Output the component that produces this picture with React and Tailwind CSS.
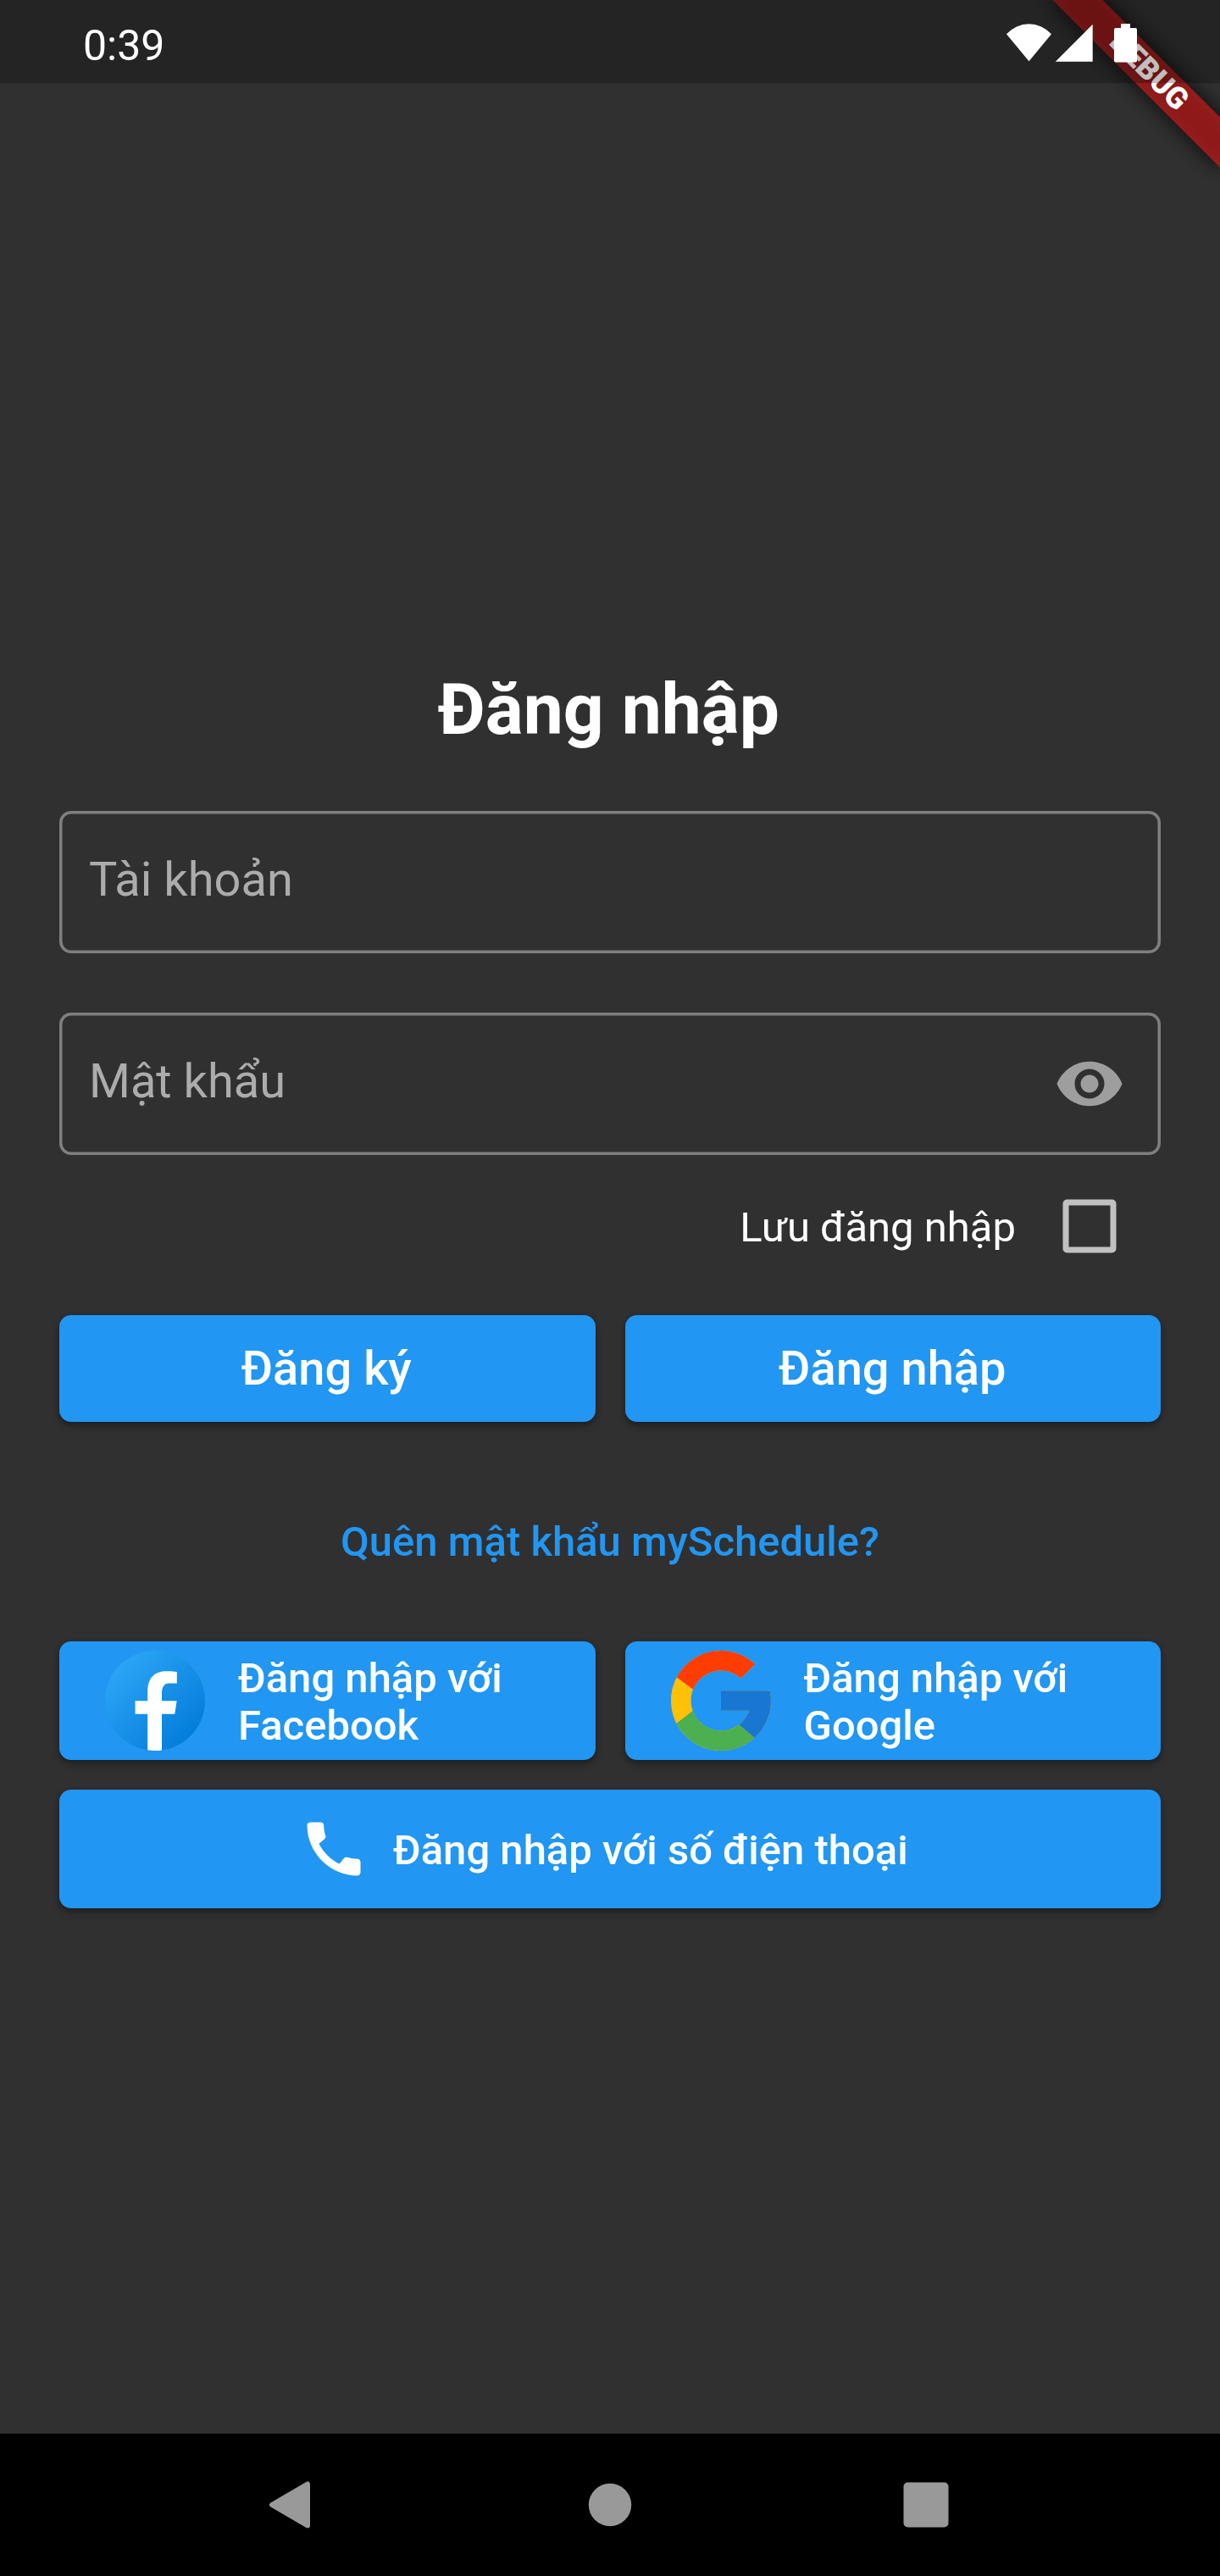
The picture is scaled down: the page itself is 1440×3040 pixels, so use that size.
import { useState } from "react";
import { MdCall, MdVisibility } from "react-icons/md";

const button =
  "rounded-[14px] bg-[#2196f3] font-medium text-white shadow-[0_5px_8px_rgba(0,0,0,0.3),0_1px_5px_rgba(0,0,0,0.15)]";

function StatusBar() {
  return (
    <div className="absolute inset-x-0 top-0 flex h-[98px] items-start justify-between bg-black/25 pl-[98px] pr-[98px] text-white">
      <span className="pt-[24px] text-[50px] leading-[60px]">0:39</span>
      <div className="flex items-start pt-7">
        <svg className="h-[46px] w-[53px]" viewBox="0 0 53 46" fill="currentColor">
          <path d="M26.5 44.3 0 12.3A35.3 35.3 0 0 1 53 12.3Z" />
        </svg>
        <svg className="ml-[5px] h-[46px] w-11" viewBox="0 0 44 46" fill="currentColor">
          <path d="M43.7 .8V44.7H-.2Z" />
        </svg>
        <svg className="ml-[25px] h-[46px] w-[27px]" viewBox="0 0 27 46" fill="currentColor">
          <path d="M8 0H19V5H25a2 2 0 0 1 2 2V43.4a2 2 0 0 1-2 2H2a2 2 0 0 1-2-2V7a2 2 0 0 1 2-2H8Z" />
        </svg>
      </div>
    </div>
  );
}

function DebugBanner() {
  return (
    <div className="pointer-events-none absolute right-0 top-0 h-[280px] w-[280px] overflow-hidden">
      <div className="absolute left-[56px] top-[63px] h-[42px] w-[280px] rotate-45">
        <div className="absolute inset-0 bg-black/85 blur-[12.5px]" />
        <div className="relative flex h-full items-center justify-center bg-[#b71c1c]/77 text-[35.7px] font-black leading-none text-white">
          DEBUG
        </div>
      </div>
    </div>
  );
}

function Field({ label, children }) {
  return (
    <label className="flex h-[168px] items-center justify-between rounded-[14px] pl-[35px] pr-[42px] shadow-[inset_0_0_0_3.5px_#7f7f7f]">
      <span className="pb-[6px] text-[56px] leading-[66px] text-[#acacac]">{label}</span>
      {children}
    </label>
  );
}

function FacebookLogo() {
  return (
    <svg className="h-[118px] w-[118px] shrink-0" viewBox="4 4 40 40">
      <defs>
        <linearGradient id="fb" x1="9.993" y1="9.993" x2="40.615" y2="40.615" gradientUnits="userSpaceOnUse">
          <stop offset="0" stopColor="#2aa4f4" />
          <stop offset="1" stopColor="#007ad9" />
        </linearGradient>
      </defs>
      <circle cx="24" cy="24" r="20" fill="url(#fb)" />
      <path
        fill="#fff"
        d="M26.707,29.301h5.176l0.813-5.258h-5.989v-2.874c0-2.184,0.714-4.121,2.757-4.121h3.283V12.46c-0.577-0.078-1.797-0.248-4.102-0.248c-4.814,0-7.636,2.542-7.636,8.334v3.498H16.06v5.258h4.948v14.452C21.988,43.9,22.981,44,24,44c0.921,0,1.82-0.084,2.707-0.204V29.301z"
      />
    </svg>
  );
}

function GoogleLogo() {
  return (
    <svg className="h-[118px] w-[118px] shrink-0" viewBox="4 4 40 40">
      <path
        fill="#FFC107"
        d="M43.611,20.083H42V20H24v8h11.303c-1.649,4.657-6.08,8-11.303,8c-6.627,0-12-5.373-12-12c0-6.627,5.373-12,12-12c3.059,0,5.842,1.154,7.961,3.039l5.657-5.657C34.046,6.053,29.268,4,24,4C12.955,4,4,12.955,4,24c0,11.045,8.955,20,20,20c11.045,0,20-8.955,20-20C44,22.659,43.862,21.35,43.611,20.083z"
      />
      <path
        fill="#FF3D00"
        d="M6.306,14.691l6.571,4.819C14.655,15.108,18.961,12,24,12c3.059,0,5.842,1.154,7.961,3.039l5.657-5.657C34.046,6.053,29.268,4,24,4C16.318,4,9.656,8.337,6.306,14.691z"
      />
      <path
        fill="#4CAF50"
        d="M24,44c5.166,0,9.86-1.977,13.409-5.192l-6.19-5.238C29.211,35.091,26.715,36,24,36c-5.202,0-9.619-3.317-11.283-7.946l-6.522,5.025C9.505,39.556,16.227,44,24,44z"
      />
      <path
        fill="#1976D2"
        d="M43.611,20.083H42V20H24v8h11.303c-0.792,2.237-2.231,4.166-4.087,5.571c0.001-0.001,0.002-0.001,0.003-0.002l6.19,5.238C36.971,39.205,44,34,44,24C44,22.659,43.862,21.35,43.611,20.083z"
      />
    </svg>
  );
}

function SocialButton({ logo, name }) {
  return (
    <button className={`${button} flex h-[140px] items-center gap-[39px] pl-[54px] text-left text-[49px] leading-[56px]`}>
      {logo}
      <span className="pt-[3px]">
        Đăng nhập với
        <br />
        {name}
      </span>
    </button>
  );
}

function NavBar() {
  return (
    <nav className="flex h-[168px] items-center bg-black pl-[317px] text-[#999999]">
      <svg className="h-[56px] w-[50px]" viewBox="0 0 50 56" fill="currentColor">
        <path d="M4 28 46 3.5V52.5Z" stroke="currentColor" strokeWidth="6" strokeLinejoin="round" />
      </svg>
      <svg className="ml-[327px] h-[52px] w-[52px]" viewBox="0 0 52 52" fill="currentColor">
        <circle cx="26" cy="26" r="25.2" />
      </svg>
      <svg className="ml-[320px] h-[54px] w-[54px]" viewBox="0 0 54 54" fill="currentColor">
        <rect x=".5" y=".5" width="53" height="53" rx="5" />
      </svg>
    </nav>
  );
}

export default function App() {
  const [saved, setSaved] = useState(false);
  return (
    <div className="relative flex h-[3040px] w-[1440px] flex-col overflow-hidden bg-[#303030] font-['Roboto',sans-serif]">
      <main className="flex grow flex-col px-[70px] pt-[789px]">
        <h1 className="pr-[3px] text-center text-[84px] font-bold leading-[98px] text-white">Đăng nhập</h1>
        <div className="mt-[70px] flex flex-col gap-[70px]">
          <Field label="Tài khoản" />
          <Field label="Mật khẩu">
            <MdVisibility className="size-[84px] text-[#9e9e9e]" />
          </Field>
        </div>

        <div className="flex h-[168px] items-center justify-end">
          <span className="pr-[3px] pt-[3px] text-[49px] leading-[58px] text-white">Lưu đăng nhập</span>
          <button
            role="checkbox"
            aria-checked={saved}
            onClick={() => setSaved(!saved)}
            className="flex size-[168px] items-center justify-center"
          >
            <svg className="size-16" viewBox="0 0 64 64" fill="none">
              <rect x="4" y="4" width="56" height="56" rx="1.5" stroke="#c1c1c1" strokeWidth="7" />
              {saved && <path d="M16 33 28 45 50 21" stroke="#c1c1c1" strokeWidth="7" />}
            </svg>
          </button>
        </div>

        <div className="mt-[21px] grid grid-cols-2 gap-[35px]">
          <button className={`${button} h-[126px] pr-[2px] text-[56px] leading-[66px]`}>Đăng ký</button>
          <button className={`${button} h-[126px] pr-px text-[56px] leading-[66px]`}>Đăng nhập</button>
        </div>

        <button className="mt-[70px] h-[140px] pt-[3px] text-[49px] font-medium leading-[58px] text-[#2196f3]">
          Quên mật khẩu mySchedule?
        </button>

        <div className="mt-[49px] grid grid-cols-2 gap-[35px]">
          <SocialButton logo={<FacebookLogo />} name="Facebook" />
          <SocialButton logo={<GoogleLogo />} name="Google" />
          <button className={`${button} col-span-2 flex h-[140px] items-center pl-[282px] text-[49px] leading-[58px]`}>
            <MdCall className="size-[84px]" />
            <span className="pl-7 pt-[3px]">Đăng nhập với số điện thoại</span>
          </button>
        </div>
      </main>
      <NavBar />
      <DebugBanner />
      <StatusBar />
    </div>
  );
}
